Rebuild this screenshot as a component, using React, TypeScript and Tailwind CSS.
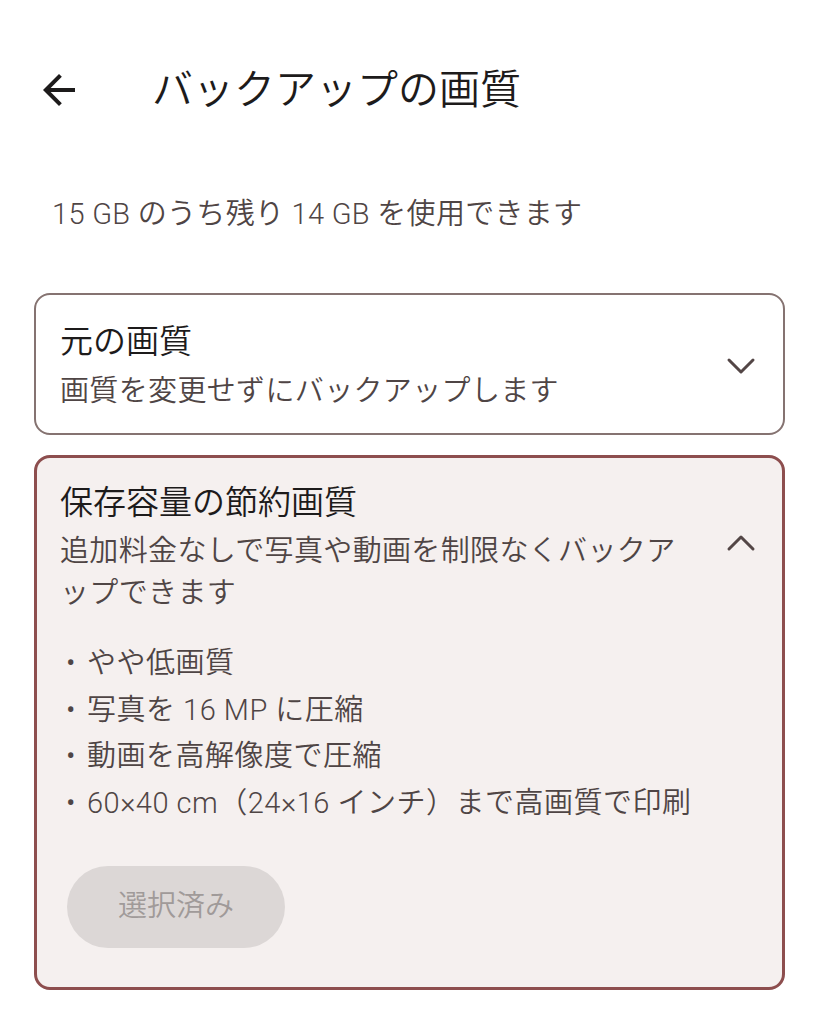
import React from "react"

const ArrowBack = () => (
  <svg className="w-12 h-12 shrink-0 text-[#1d1b1b]" viewBox="0 0 24 24" fill="currentColor">
    <path d="M20 11H7.83l5.59-5.59L12 4l-8 8 8 8 1.41-1.41L7.83 13H20v-2z" />
  </svg>
)

const Chevron = ({ up }: { up?: boolean }) => (
  <svg
    className="w-12 h-12 shrink-0 text-[#534646]"
    viewBox="0 0 24 24"
    fill="none"
    stroke="currentColor"
    strokeWidth="1.5"
    strokeLinecap="round"
    strokeLinejoin="round"
  >
    {up ? <path d="M6 15l6-6 6 6" /> : <path d="M6 9l6 6 6-6" />}
  </svg>
)

const bullets = [
  "やや低画質",
  "写真を 16 MP に圧縮",
  "動画を高解像度で圧縮",
  "60×40 cm（24×16 インチ）まで高画質で印刷",
]

export default function App() {
  return (
    <div
      className="min-h-[1024px] w-full bg-white pt-[62px] font-[350]"
      style={{ fontFamily: 'Roboto, "Noto Sans CJK JP", sans-serif' }}
    >
      {/* Top app bar */}
      <div className="flex items-center h-[56px] pl-[35px] gap-[69px]">
        <ArrowBack />
        <h1 className="text-[41px] leading-[56px] font-[350] text-[#1d1b1b]">バックアップの画質</h1>
      </div>

      <p className="mt-[76px] pl-[52px] text-[29px] leading-[40px] tracking-[0.3px] text-[#4f4545]">
        15 GB のうち残り 14 GB を使用できます
      </p>

      <div className="mt-[59px] mx-[34px] flex flex-col gap-[20px]">
        {/* Original quality */}
        <div className="flex items-center rounded-[16px] border-2 border-[#857371] bg-white pl-[24px] pr-[18px] pt-[25px] pb-[21px]">
          <div className="flex-1">
            <div className="text-[33px] leading-[44px] text-[#1d1b1b]">元の画質</div>
            <div className="mt-[6px] text-[29px] leading-[42px] tracking-[0.35px] text-[#4f4545]">
              画質を変更せずにバックアップします
            </div>
          </div>
          <Chevron />
        </div>

        {/* Storage saver */}
        <div className="rounded-[16px] border-[3px] border-[#8d4e4e] bg-[#f5f0ef] pl-[23px] pr-[17px] pt-[23px] pb-[39px]">
          <div className="flex items-start">
            <div className="flex-1">
              <div className="text-[33px] leading-[44px] text-[#1d1b1b]">保存容量の節約画質</div>
              <div className="mt-[5px] text-[29px] leading-[42px] tracking-[0.35px] text-[#4f4545]">
                追加料金なしで写真や動画を制限なくバックア
                <br />
                ップできます
              </div>
            </div>
            <div className="mt-[38px]">
              <Chevron up />
            </div>
          </div>

          <ul className="mt-[26px] pl-[6px] text-[29px] leading-[46.5px] tracking-[0.5px] text-[#4f4545]">
            {bullets.map((b) => (
              <li key={b} className="flex">
                <span className="w-[21px] shrink-0">•</span>
                <span>{b}</span>
              </li>
            ))}
          </ul>

          <button
            disabled
            className="mt-[40px] ml-[7px] h-[82px] w-[218px] rounded-full bg-[#dcd7d6] text-[29px] font-[350] text-[#a09a99]"
          >
            選択済み
          </button>
        </div>
      </div>
    </div>
  )
}
